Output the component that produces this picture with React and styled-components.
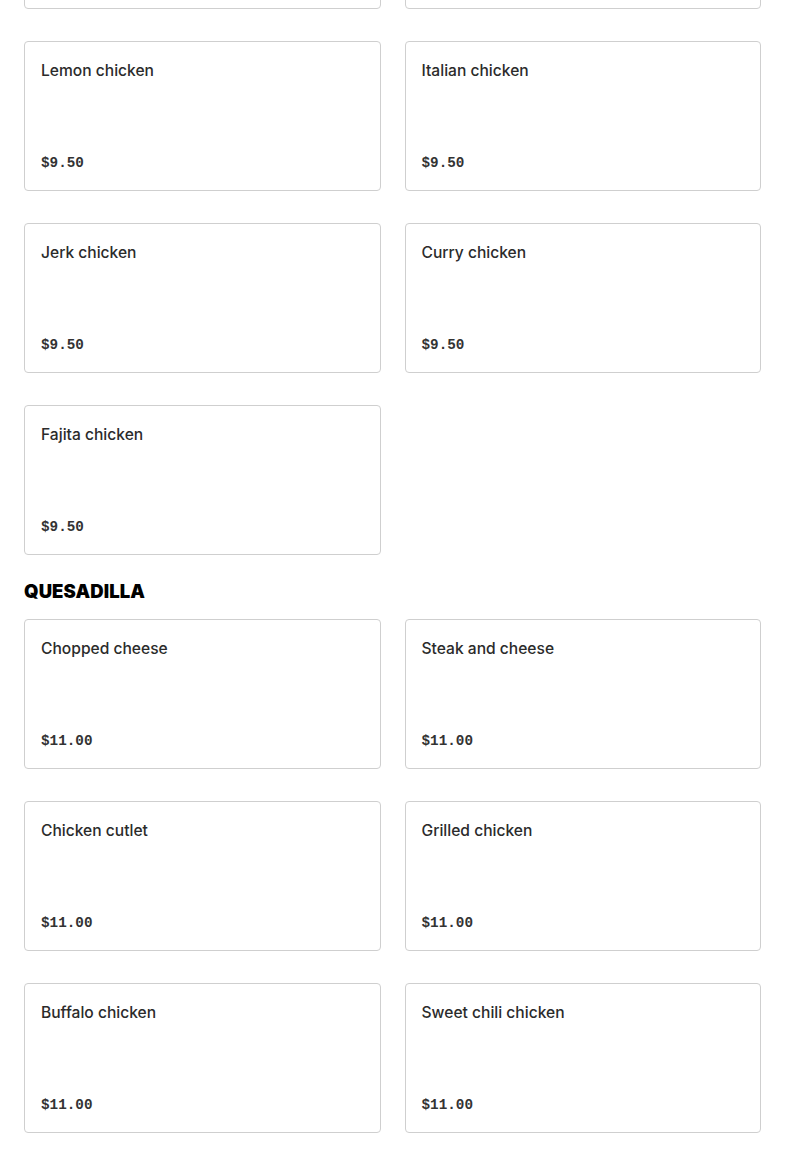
import styled, { createGlobalStyle } from "styled-components";

const Global = createGlobalStyle`
  body {
    margin: 0;
    background: #fff;
    font-family: Inter, "Noto Sans", sans-serif;
  }
`

// page is scrolled: only the bottom edge of the row above shows
const Page = styled.main`
  padding: 0 24px 24px;
  margin-top: -141px;
`

const Section = styled.section`
  display: flex;
  flex-direction: column;
`

const Heading = styled.h2`
  margin: 24px 0 16px;
  font-size: 18.5px;
  line-height: 24px;
  font-weight: 900;
  letter-spacing: 0.1px;
  color: #000;
  text-transform: uppercase;
`

const Grid = styled.div`
  display: grid;
  grid-template-columns: 1fr 1fr;
  column-gap: 24px;
  row-gap: 32px;
`

const Card = styled.div`
  box-sizing: border-box;
  height: 150px;
  padding: 17px 16px 15px;
  border: 1px solid #cfcfcf;
  border-radius: 4px;
  display: flex;
  flex-direction: column;
  justify-content: space-between;
  background: #fff;
`

const Name = styled.div`
  font-size: 15.6px;
  line-height: 24px;
  font-weight: 500;
  color: #2b2b2b;
`

const Price = styled.div`
  font-family: "Liberation Mono", "DejaVu Sans Mono", monospace;
  font-size: 14.3px;
  line-height: 24px;
  font-weight: 700;
  color: #333;
`

const menu = [
  {
    title: null,
    items: [
      [null, null],
      [null, null],
      ["Lemon chicken", "$9.50"],
      ["Italian chicken", "$9.50"],
      ["Jerk chicken", "$9.50"],
      ["Curry chicken", "$9.50"],
      ["Fajita chicken", "$9.50"],
    ],
  },
  {
    title: "Quesadilla",
    items: [
      ["Chopped cheese", "$11.00"],
      ["Steak and cheese", "$11.00"],
      ["Chicken cutlet", "$11.00"],
      ["Grilled chicken", "$11.00"],
      ["Buffalo chicken", "$11.00"],
      ["Sweet chili chicken", "$11.00"],
    ],
  },
]

export default function App() {
  return (
    <>
      <Global/>
      <Page>
        {menu.map((sec, i) => (
          <Section key={i}>
            {sec.title && <Heading>{sec.title}</Heading>}
            <Grid>
              {sec.items.map(([name, price], j) => (
                <Card key={j}>
                  {name && <Name>{name}</Name>}
                  {price && <Price>{price}</Price>}
                </Card>
              ))}
            </Grid>
          </Section>
        ))}
      </Page>
    </>
  )
}
